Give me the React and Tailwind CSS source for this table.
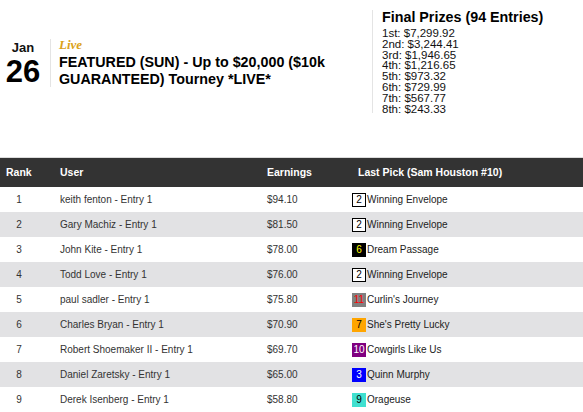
import React from 'react';

const prizes = [
    ['1st', '$7,299.92'],
    ['2nd', '$3,244.41'],
    ['3rd', '$1,946.65'],
    ['4th', '$1,216.65'],
    ['5th', '$973.32'],
    ['6th', '$729.99'],
    ['7th', '$567.77'],
    ['8th', '$243.33'],
];

const rows = [
    { rank: 1, user: 'keith fenton - Entry 1', earn: '$94.10', num: '2', horse: 'Winning Envelope', badge: 'bg-white text-black border border-black' },
    { rank: 2, user: 'Gary Machiz - Entry 1', earn: '$81.50', num: '2', horse: 'Winning Envelope', badge: 'bg-white text-black border border-black' },
    { rank: 3, user: 'John Kite - Entry 1', earn: '$78.00', num: '6', horse: 'Dream Passage', badge: 'bg-black text-[#ffff00]' },
    { rank: 4, user: 'Todd Love - Entry 1', earn: '$76.00', num: '2', horse: 'Winning Envelope', badge: 'bg-white text-black border border-black' },
    { rank: 5, user: 'paul sadler - Entry 1', earn: '$75.80', num: '11', horse: "Curlin's Journey", badge: 'bg-[#808080] text-[#ff0000]' },
    { rank: 6, user: 'Charles Bryan - Entry 1', earn: '$70.90', num: '7', horse: "She's Pretty Lucky", badge: 'bg-[#ffa500] text-black' },
    { rank: 7, user: 'Robert Shoemaker II - Entry 1', earn: '$69.70', num: '10', horse: 'Cowgirls Like Us', badge: 'bg-[#800080] text-white' },
    { rank: 8, user: 'Daniel Zaretsky - Entry 1', earn: '$65.00', num: '3', horse: 'Quinn Murphy', badge: 'bg-[#0000ff] text-white' },
    { rank: 9, user: 'Derek Isenberg - Entry 1', earn: '$58.80', num: '9', horse: 'Orageuse', badge: 'bg-[#40e0d0] text-black' },
];

const cols = 'grid grid-cols-[54px_207px_91px_1fr]';

export default function App() {
    return (
        <div className="w-[583px] h-[412px] overflow-hidden bg-white text-[#222]" style={{ fontFamily: "'Liberation Sans', Arial, sans-serif" }}>
            {/* Top info */}
            <div className="h-[157px] flex items-start justify-between">
                <div className="flex items-center mt-[38px] ml-[7px]">
                    <div className="w-[32px] flex flex-col items-center">
                        <span className="text-[13px] font-bold leading-[15px] text-[#111]">Jan</span>
                        <span className="mt-[2px] text-[31px] font-bold leading-[30px] text-black">26</span>
                    </div>
                    <div className="ml-[11px] h-[48px] w-px bg-[#e4e4e4]" />
                    <div className="ml-[8px] flex flex-col">
                        <span className="text-[13px] font-bold italic leading-[14px] text-[#dba21a]" style={{ fontFamily: "'Liberation Serif', serif" }}>Live</span>
                        <span className="mt-[2px] text-[14.3px] font-bold leading-[17px] text-black w-[280px]">FEATURED (SUN) - Up to $20,000 ($10k GUARANTEED) Tourney *LIVE*</span>
                    </div>
                </div>
                <div className="mt-[10px] w-[211px] border-l border-[#e4e4e4] pl-[9px] h-[103px]">
                    <div className="text-[14.3px] font-bold leading-[17px] text-black -mt-px">Final Prizes (94 Entries)</div>
                    <div className="mt-[2px] text-[11.5px] leading-[10.8px] text-[#111]">
                        {prizes.map(([p, v]) => (
                            <div key={p}>{p}: {v}</div>
                        ))}
                    </div>
                </div>
            </div>

            {/* Standings */}
            <div className="border-t border-[#dcdcdc]">
                <div className={`${cols} h-[29px] items-center bg-[#333333] text-white text-[10.5px] font-bold`}>
                    <div className="pl-[6px]">Rank</div>
                    <div className="pl-[6px]">User</div>
                    <div className="pl-[6px]">Earnings</div>
                    <div className="pl-[6px]">Last Pick (Sam Houston #10)</div>
                </div>
                {rows.map((r, i) => (
                    <div key={r.rank} className={`${cols} h-[25px] items-center text-[10px] text-[#333] ${i % 2 === 1 ? 'bg-[#e2e2e4]' : 'bg-white'}`}>
                        <div className="pl-[6px]"><div className="w-[26px] text-center">{r.rank}</div></div>
                        <div className="pl-[6px]">{r.user}</div>
                        <div className="pl-[6px]">{r.earn}</div>
                        <div className="flex items-center">
                            <span className={`w-[14px] h-[14px] flex items-center justify-center text-[10px] leading-none box-border ${r.badge}`}>{r.num}</span>
                            <span className="ml-px text-[#222]">{r.horse}</span>
                        </div>
                    </div>
                ))}
            </div>
        </div>
    );
}
